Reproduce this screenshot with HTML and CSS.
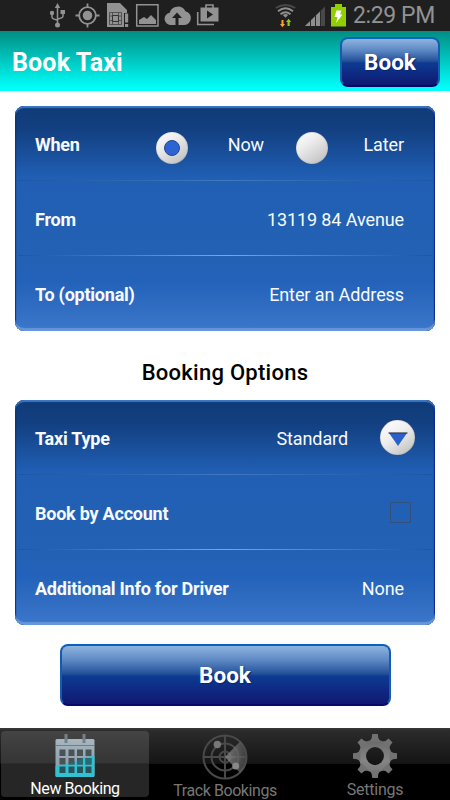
FILE: index.html
```html
<!DOCTYPE html>
<html lang="en">
<head>
	<meta charset="UTF-8">
	<meta name="viewport" content="width=device-width, initial-scale=1.0">
	<title>Book Taxi</title>
	<link rel="stylesheet" href="styles.css">
</head>
<body>

<div class="status-bar">
	<svg class="status-icons" width="180" height="31" viewBox="0 0 180 31">
		<!-- usb -->
		<g fill="none" stroke="#929292" stroke-width="1.5">
			<path d="M10.5 7v17M5 14v3q0 2 5 3M16 13v3q0 2-5 3"/>
		</g>
		<path d="M10.5 3l2.7 5H7.8zM13.500 10h4.500v4h-4.500z" fill="#929292"/>
		<circle cx="5" cy="13" r="2.200" fill="#929292"/>
		<circle cx="10.500" cy="25" r="2.500" fill="#929292"/>
		<!-- gps -->
		<circle cx="40.500" cy="15.500" r="8.300" fill="none" stroke="#929292" stroke-width="1.800"/>
		<circle cx="40.500" cy="15.500" r="4.800" fill="#929292"/>
		<path d="M40.500 3.500v4M40.500 23.500v4M28.500 15.500h4M48.500 15.500h4" stroke="#929292" stroke-width="1.800"/>
		<!-- sim card -->
		<path d="M60 3h13l7 7v3h-3v14H60z" fill="#929292"/>
		<path d="M62.500 12.500h12v12h-12zM65.500 12.500v12M71.500 12.500v12M62.500 16h3M62.500 20.500h3M71.500 16h3M71.500 20.500h3" fill="none" stroke="#444" stroke-width=".8"/>
		<path d="M65.500 15.500h6v6h-6z" fill="none" stroke="#333"/>
		<path d="M78 13.500h3.200v9H78zM78 24h3.200v3H78z" fill="#929292"/>
		<!-- picture -->
		<path d="M89.700 4.700h21.300v21.300h-21.300z" fill="none" stroke="#929292" stroke-width="1.500"/>
		<path d="M92 24v-4l5-3 3 2 4-4 5 5v4z" fill="#929292"/>
		<!-- cloud upload -->
		<path d="M123.500 25a6.200 6.200 0 0 1-.8-12.300 8.500 8.500 0 0 1 15.700-1.500A7 7 0 0 1 137.500 25z" fill="#929292"/>
		<path d="M130 12.500l5 5.500h-3.500v7h-3v-7H125z" fill="#1f1f1f"/>
		<!-- play store -->
		<path d="M153.500 7.500h18v14h-18z" fill="#929292"/>
		<path d="M159 8V5h7v3M150.700 12v12.500H167" fill="none" stroke="#929292" stroke-width="1.600"/>
		<path d="M160 10.500l6 4-6 4z" fill="#1f1f1f"/>
	</svg>
	<svg class="status-signal" width="80" height="31" viewBox="0 0 80 31">
		<!-- wifi -->
		<g fill="none" stroke-width="2">
			<path d="M.8 8q9.700-6 19.400 0" stroke="#484848"/>
			<path d="M3 11.300q7.500-6 15 0M5.500 14.200q5-4 10 0" stroke="#8f8f8f"/>
		</g>
		<path d="M7.800 15q2.700-2 5.400 0l-2.700 2.700z" fill="#8f8f8f"/>
		<path d="M6.500 20h2v4H10l-2.600 3.300L5 24h1.500z" fill="#ffa033"/>
		<path d="M12.500 26v-4H11l2.600-3.300L16.200 22h-1.500v4z" fill="#90cf10"/>
		<!-- signal -->
		<path d="M50 6.500V26H30z" fill="#484848"/>
		<path d="M45 11.500V26H30z" fill="#8f8f8f"/>
		<path d="M35.500 20v6M40.500 15v11M45.500 10v16" stroke="#2a2a2a" stroke-width="1"/>
		<!-- battery -->
		<path d="M56 7h4V4h7v3h4v19.500H56z" fill="#90cf00"/>
		<path d="M61.500 10.500h5l-1.500 4h2.500L61 23l1.500-6h-3z" fill="#fff"/>
	</svg>
	<span class="clock">2:29 PM</span>
</div>

<div class="header">
	<h1>Book Taxi</h1>
	<button class="btn btn-small">Book</button>
</div>

<div class="content">
	<div class="card">
		<div class="row">
			<span class="label when-label">When</span>
			<span class="radio checked"></span>
			<span class="value radio-text">Now</span>
			<span class="radio later"></span>
			<span class="value radio-text">Later</span>
		</div>
		<div class="row">
			<span class="label">From</span>
			<span class="value street">13119 84 Avenue</span>
		</div>
		<div class="row">
			<span class="label">To (optional)</span>
			<span class="value">Enter an Address</span>
		</div>
	</div>

	<h2>Booking Options</h2>

	<div class="card card-options">
		<div class="row row-select">
			<span class="label">Taxi Type</span>
			<span class="value">Standard</span>
			<span class="dropdown">
				<svg width="20" height="15" viewBox="0 0 20 15"><path d="M1 1h18l-9 13z" fill="#2a60cc"/><path d="M0.500 1h19" stroke="#353b48" stroke-width="1.200"/></svg>
			</span>
		</div>
		<div class="row row-check">
			<span class="label">Book by Account</span>
			<span class="checkbox"></span>
		</div>
		<div class="row">
			<span class="label">Additional Info for Driver</span>
			<span class="value">None</span>
		</div>
	</div>

	<button class="btn btn-large">Book</button>
</div>

<div class="tab-bar">
	<div class="tab active">
		<svg width="40" height="44" viewBox="0 0 40 44">
			<defs>
				<linearGradient id="steel" x1="0" y1="0" x2="0" y2="1">
					<stop offset="0" stop-color="#a9b6bf"/>
					<stop offset="1" stop-color="#84949f"/>
				</linearGradient>
			</defs>
			<rect x=".5" y="5" width="39" height="38" rx="1.500" fill="url(#steel)"/>
			<path d="M.5 32Q8 30 14 29q7-1 12-4 6-3 13.500-3v19.500q0 1.500-1.500 1.500H2q-1.500 0-1.500-1.500z" fill="#32c1d2"/>
			<path d="M1 11.500h38" stroke="#6e7f88"/>
			<path d="M9.500 0h3v9h-3zM27.500 0h3v9h-3z" fill="#75818a"/>
			<g fill="#475358">
				<path d="M4.500 15.500h6v6.500h-6zM13.500 15.500h6v6.500h-6zM22 15.500h6v6.500h-6zM30.500 15.500h6v6.500h-6z"/>
				<path d="M4.500 24h6v6.500h-6zM13.500 24h6v6.500h-6zM22 24h6v6.500h-6zM30.500 24h6v6.500h-6z"/>
			</g>
			<path d="M13.500 29.300q3-.5 6-1.300v2.500h-6zM22 27q3-1.200 6-3v6.500h-6zM30.500 24h6v6.500h-6z" fill="#286b75"/>
			<path d="M4.500 32.500h6v6.500h-6zM13.500 32.500h6v6.500h-6zM22 32.500h6v6.500h-6zM30.500 32.500h6v6.500h-6z" fill="#27535b"/>
		</svg>
		<span class="tab-text">New Booking</span>
	</div>
	<div class="tab tab-track">
		<svg width="46" height="46" viewBox="0 0 46 46">
			<defs>
				<linearGradient id="sweep">
					<stop offset="0" stop-color="#909090"/>
					<stop offset="1" stop-color="#484848"/>
				</linearGradient>
			</defs>
			<g fill="none" stroke="#494949" stroke-width="2">
				<circle cx="23" cy="23" r="21.500"/>
				<circle cx="23" cy="23" r="13.500"/>
				<circle cx="23" cy="23" r="5.500"/>
				<path d="M23 1v44M1 23h44"/>
			</g>
			<path d="M23 23L38 7.500A22 22 0 0 1 38 39z" fill="url(#sweep)" opacity=".75"/>
			<circle cx="15.300" cy="10.500" r="3.700" fill="#777"/>
			<circle cx="33.700" cy="32" r="3.500" fill="#888"/>
		</svg>
		<span class="tab-text">Track Bookings</span>
	</div>
	<div class="tab tab-settings">
		<svg width="44" height="44" viewBox="-22 -22 44 44">
			<defs>
				<linearGradient id="metal" gradientUnits="userSpaceOnUse" x1="0" y1="-22" x2="0" y2="22">
					<stop offset="0" stop-color="#626262"/>
					<stop offset=".6" stop-color="#858585"/>
					<stop offset="1" stop-color="#707070"/>
				</linearGradient>
			</defs>
			<circle r="12.700" fill="none" stroke="url(#metal)" stroke-width="7.500"/>
			<g fill="#727272">
				<path id="tooth" d="M-5.500-14.500l2.200-3.500.5-4h5.600l.5 4 2.200 3.500z"/>
				<use href="#tooth" transform="rotate(45)"/>
				<use href="#tooth" transform="rotate(90)"/>
				<use href="#tooth" transform="rotate(135)"/>
				<use href="#tooth" transform="rotate(180)"/>
				<use href="#tooth" transform="rotate(225)"/>
				<use href="#tooth" transform="rotate(270)"/>
				<use href="#tooth" transform="rotate(315)"/>
			</g>
		</svg>
		<span class="tab-text">Settings</span>
	</div>
</div>

</body>
</html>
```
FILE: styles.css
```css
* {
	box-sizing: border-box;
}
body {
	margin: 0;
	width: 450px;
	height: 800px;
	display: flex;
	flex-direction: column;
	overflow: hidden;
	background: #fff;
	font-family: Roboto, sans-serif;
}
svg {
	display: block;
	flex: none;
}
.status-bar {
	height: 31px;
	flex: none;
	display: flex;
	align-items: center;
	padding-left: 47px;
	background: #1f1f1f;
}
.status-signal {
	margin-left: 48px;
}
.clock {
	margin-left: -2px;
	font-size: 23px;
	line-height: 31px;
	letter-spacing: -0.4px;
	color: #929292;
	white-space: nowrap;
}
.header {
	height: 60px;
	flex: none;
	display: flex;
	align-items: center;
	justify-content: space-between;
	padding: 0 10px 0 12px;
	background: linear-gradient(#008d84, #00fffa 95%);
}
h1 {
	margin: 4px 0 0;
	font-size: 25px;
	line-height: 30px;
	letter-spacing: 0.15px;
	color: #fff;
}
.btn {
	padding: 0;
	border: 2px solid #155bb0;
	border-top-color: #0a62bd;
	border-bottom-color: #07096b;
	border-radius: 8px;
	background: linear-gradient(#8fb4df, #5b87c3 25%, #245099 48%, #0d3b91 52%, #0e2c85 72%, #101970);
	color: #fff;
	font-family: Roboto, sans-serif;
	font-weight: bold;
	text-shadow: 1px 1px 1px #0a246f;
}
.btn-small {
	width: 100px;
	height: 50px;
	margin-top: 1px;
	font-size: 22.5px;
}
.content {
	height: 637px;
	flex: none;
	padding: 15px 15px 0;
}
.card {
	height: 225px;
	border-radius: 9px;
	background: linear-gradient(#0f3b77, #123f80 10%, #205fb4 32%, #2261b3 66%, #2362b9 78%, #3975c8 98%);
	box-shadow: inset 0 2px 1px #3a77c4, inset 0 -3px 1px #6796da, inset 1px 0 1px #001c73, inset -1px 0 1px #001080;
}
.row {
	height: 75px;
	display: flex;
	align-items: center;
	justify-content: space-between;
	padding: 2px 31px 0 20px;
	font-size: 18px;
	line-height: 22px;
	color: #f7faff;
	background: linear-gradient(90deg, #1b57a3, #4378bd 50%, #1b57a3) no-repeat center bottom / 414px 1px;
}
.row:nth-child(2) {
	background-image: linear-gradient(90deg, #1b57a3, #7da6dc 50%, #1b57a3);
}
.row:last-child {
	background: none;
}
.label {
	font-weight: bold;
	letter-spacing: -0.23px;
}
.value {
	letter-spacing: -0.1px;
}
.when-label {
	width: 121px;
}
.radio {
	width: 32px;
	height: 32px;
	flex: none;
	display: flex;
	align-items: center;
	justify-content: center;
	margin-top: 6px;
	border-radius: 50%;
	background: linear-gradient(145deg, #fff, #eee 35%, #b9b9b9);
	box-shadow: inset 0 0 1px #667;
}
.checked::after {
	content: "";
	width: 14px;
	height: 14px;
	border: 1px solid #25478e;
	border-radius: 50%;
	background: #2c64d3;
}
.later {
	margin-left: 32px;
}
.radio-text {
	width: 76px;
	text-align: right;
}
h2 {
	margin: 27px 0 12px;
	font-size: 22px;
	font-weight: 500;
	line-height: 30px;
	letter-spacing: 0.27px;
	text-align: center;
	color: #000;
}
.row-select {
	padding-right: 20px;
}
.row-select .value {
	margin-left: auto;
	margin-right: 32px;
}
.dropdown {
	width: 35px;
	height: 35px;
	display: flex;
	align-items: center;
	justify-content: center;
	padding-top: 3px;
	margin-top: -2px;
	border-radius: 50%;
	background: linear-gradient(145deg, #fff, #eee 45%, #b9b9b9);
	box-shadow: inset 0 0 1px #667;
}
.row-check {
	padding-right: 24px;
}
.checkbox {
	width: 21px;
	height: 21px;
	margin-top: -2px;
	border: 1px solid #344f7c;
	border-radius: 1px;
}
.btn-large {
	display: block;
	width: 331px;
	height: 62px;
	margin: 19px auto 0;
	font-size: 22.5px;
}
.tab-bar {
	height: 72px;
	flex: none;
	display: flex;
	background: linear-gradient(#3a3a3a, #2b2b2b 4%, #141414 50%, #000 50%);
}
.tab {
	width: 150px;
	height: 72px;
	display: flex;
	flex-direction: column;
	align-items: center;
	padding-top: 6px;
	font-size: 16px;
	line-height: 20px;
	letter-spacing: -0.42px;
	color: #777;
}
.active {
	width: 148px;
	height: 66px;
	margin: 3px 1px;
	padding-top: 3px;
	border-radius: 4px;
	background: linear-gradient(#444, #353535 48%, #262626 50%, #262626);
	color: #fff;
}
.tab-text {
	margin-top: 1px;
}
.tab-settings .tab-text {
	margin-top: 2px;
	letter-spacing: -0.25px;
}
```
